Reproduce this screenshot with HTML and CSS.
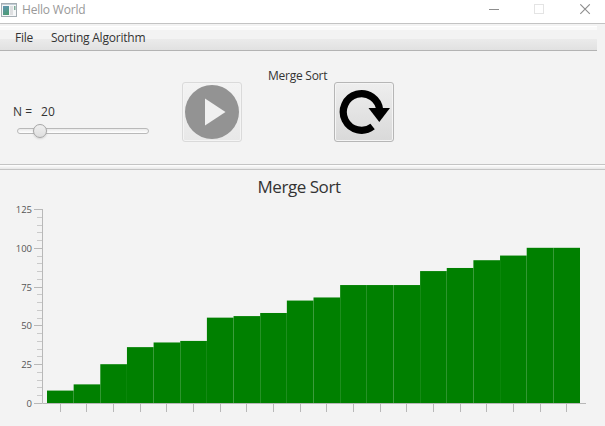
FILE: index.html
```
<!DOCTYPE html>
<html lang="en">
<head>
<meta charset="utf-8">
<title>Hello World</title>
<link rel="stylesheet" href="styles.css">
</head>
<body>
<header class="titlebar">
  <svg class="app-icon" width="16" height="14" viewBox="0 0 16 14">
    <defs><linearGradient id="app" x2="0.4" y2="1"><stop stop-color="#5f93b5"/><stop offset="1" stop-color="#4d9b78"/></linearGradient></defs>
    <rect x=".5" y=".5" width="15" height="13" fill="#f5f7f8" stroke="#a4adb3"/>
    <path d="M1 1.5h14" stroke="#c3ced6"/>
    <rect x="2" y="3" width="6" height="9" fill="url(#app)"/>
    <rect x="9" y="3" width="3" height="9" fill="#dedfe1"/>
    <rect x="13" y="3" width="1.5" height="4" fill="#7eac98"/>
  </svg>
  <span class="window-title">Hello World</span>
  <svg class="window-controls" width="104" height="11" viewBox="0 0 104 11" fill="none">
    <path d="M0 5.5h10" stroke="#8e8e8e"/>
    <rect x="45.500" y=".5" width="9" height="9" stroke="#e4e4e4"/>
    <path d="M91.300.3l9.500 9.500M100.800.3l-9.500 9.500" stroke="#8e8e8e" stroke-width="1.100"/>
  </svg>
</header>
<nav class="menubar"><span class="file">File</span><span class="sorting">Sorting Algorithm</span></nav>
<section class="controls">
  <div class="size-control">
    <div class="size-label"><span>N =</span><span>20</span></div>
    <div class="track"><div class="thumb"></div></div>
  </div>
  <button class="tool play" disabled aria-label="Play">
    <svg width="54" height="54" viewBox="0 0 54 54"><circle cx="27" cy="27" r="27" fill="#939393"/><path d="M20 13.500v27L40.500 27z" fill="#f0f0f0"/></svg>
  </button>
  <span class="algorithm">Merge Sort</span>
  <button class="tool reset" aria-label="Reset">
    <svg width="58" height="58" viewBox="0 0 58 58">
      <path d="M44.800 27.500A18.300 18.300 0 1 0 37.600 43.500" fill="none" stroke="#000" stroke-width="7.200"/>
      <path d="M33.500 25h21.500L44.300 39z"/>
    </svg>
  </button>
</section>
<div class="divider"></div>
<main class="chart">
  <h1><span>Merge Sort</span></h1>
  <svg id="plot" width="605" height="226" viewBox="0 200 605 226"></svg>
</main>
<script src="chart.js"></script>
</body>
</html>
```
FILE: styles.css
```
* { box-sizing: border-box; }
body {
  margin: 0;
  width: 605px;
  height: 426px;
  overflow: hidden;
  background: #f3f3f3;
  color: #333;
  font: 12px/16px "Open Sans", "Noto Sans", sans-serif;
}
.titlebar {
  display: flex;
  align-items: center;
  height: 24px;
  padding: 0 7px 4px 1px;
  background: #fff;
  border-bottom: 1px solid #c3c3c3;
}
.app-icon { margin-right: 5px; }
.window-title { color: #999; letter-spacing: -.2px; }
.window-controls { margin-left: auto; margin-right: 5px; }
.menubar {
  display: flex;
  align-items: center;
  gap: 18px;
  width: 597px;
  height: 25px;
  margin-top: 2px;
  padding-left: 15px;
  background: linear-gradient(#fff 0 1px, #fafafa 1px 4px, #f3f3f3 4px 13px, #ebebeb 13px, #e1e1e1);
  border-bottom: 1px solid #b3b3b3;
}
.file { width: 18px; letter-spacing: -.25px; white-space: nowrap; }
.sorting { letter-spacing: -.22px; }
.controls {
  display: grid;
  grid-template-columns: 169px 60px 26px 66px 60px;
  height: 113px;
  padding-left: 13px;
}
.size-control { padding-top: 53px; }
.size-label { display: flex; gap: 9px; }
.track {
  width: 132px;
  height: 6px;
  margin: 8px 0 0 4px;
  padding-left: 15px;
  border: 1px solid #b9b9b9;
  border-radius: 3px;
  background: linear-gradient(#eaeaea, #fff);
}
.thumb {
  width: 14px;
  height: 14px;
  margin-top: -5px;
  border: 1px solid #a6a6a6;
  border-radius: 50%;
  background: linear-gradient(#f0f0f0, #dedede);
  box-shadow: 0 1px 2px #0002;
}
.tool {
  display: grid;
  place-items: center;
  width: 60px;
  height: 60px;
  margin-top: 31px;
  padding: 0;
  border: 1px solid #b6b6b6;
  border-radius: 3px;
  background: linear-gradient(#eee, #d9d9d9);
  box-shadow: inset 0 0 0 1px #f4f4f4;
}
.play { border-color: #dadada; background: linear-gradient(#f3f3f3, #e8e8e8); }
.algorithm { padding-top: 17px; letter-spacing: -.25px; white-space: nowrap; grid-column: 4; }
.divider {
  height: 6px;
  border: solid #c4c4c4;
  border-width: 1px 0;
  background: linear-gradient(#fff, #e7e7e7);
}
.chart { height: 256px; }
h1 {
  height: 30px;
  margin: 0;
  padding-top: 5px;
  padding-right: 7px;
  text-align: center;
  font-size: 17px;
  line-height: 23px;
  font-weight: 400;
  letter-spacing: -.45px;
}
#plot { display: block; }
.tick-label { fill: #555; font-size: 9.5px; text-anchor: end; }
.axis { fill: none; stroke: #b8b8b8; }
.minor { fill: none; stroke: #cacaca; }
.bar { fill: #008000; }
```
FILE: chart.js
```
const values = [8, 12, 25, 36, 39, 40, 55, 56, 58, 66, 68, 76, 76, 76, 85, 87, 92, 95, 100, 100];
const plot = document.getElementById("plot");
const left = 47, base = 403, step = 26.65, scale = 194 / 125;

function add(name, attributes, text) {
  const node = document.createElementNS("http://www.w3.org/2000/svg", name);
  for (const key in attributes) node.setAttribute(key, attributes[key]);
  if (text !== undefined) node.textContent = text;
  plot.append(node);
}

values.forEach((value, i) => {
  const height = value * scale;
  add("rect", { class: "bar", x: left + i * step, y: base - height, width: step, height });
});

for (let value = 0; value <= 125; value += 5) {
  const y = Math.floor(base + .5 - value * scale) + .5;
  const major = value % 25 === 0;
  add("path", { class: major ? "axis" : "minor", d: `M${major ? 34 : 37} ${y}H42` });
  if (major) add("text", { class: "tick-label", x: 32, y: Math.round(base - value * scale) + 4 }, value);
}
add("path", { class: "axis", d: "M42.5 209V403.5H586" });
values.forEach((_, i) => {
  const x = Math.floor(left + (i + .5) * step) + .5;
  add("path", { class: "axis", d: `M${x} 404V412` });
});
```
